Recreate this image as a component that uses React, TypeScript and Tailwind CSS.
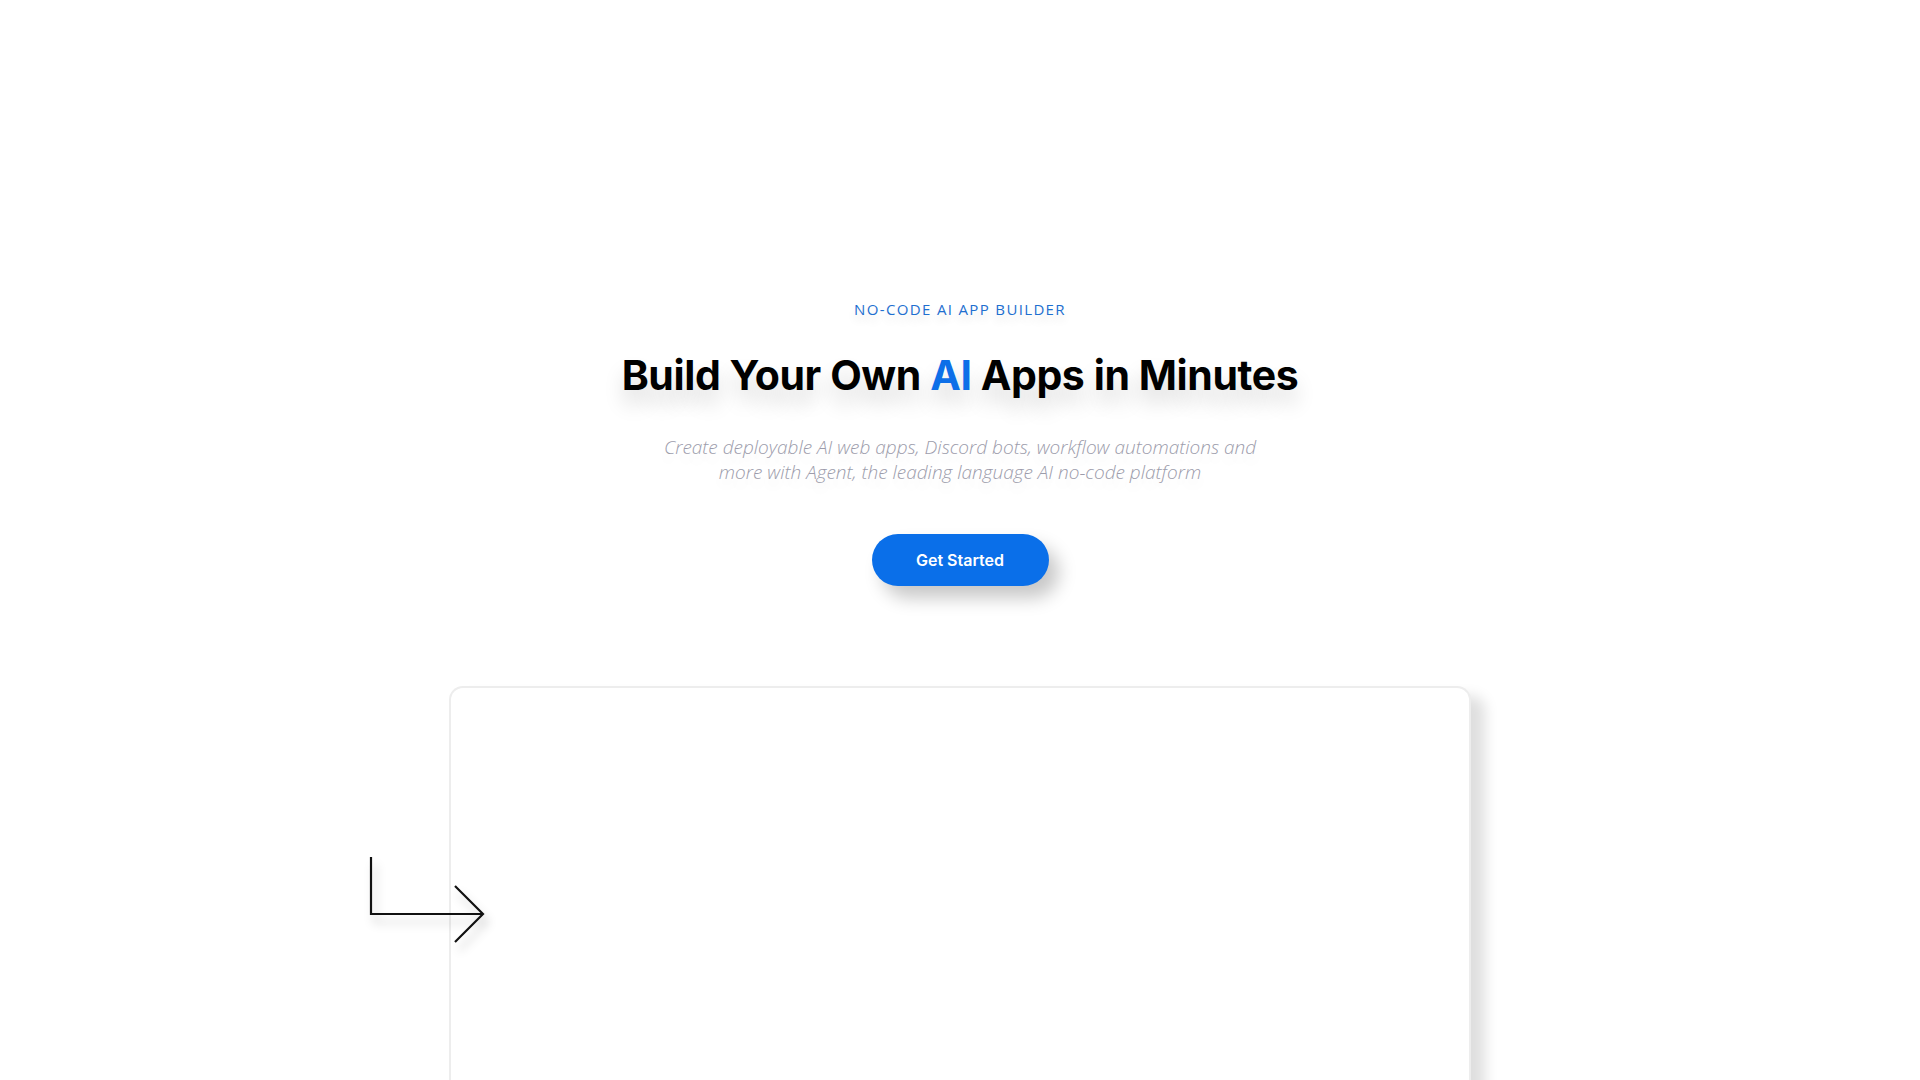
import React from 'react';

// Bent arrow pointing into the preview frame
const BentArrow: React.FC = () => (
  <svg
    width="124"
    height="96"
    viewBox="0 0 124 96"
    fill="none"
    className="absolute left-[-82px] top-[167px] drop-shadow-[4px_8px_5px_rgba(0,0,0,0.22)]"
  >
    <path d="M4 4 V61 H116" stroke="#111" strokeWidth="2.2" />
    <path d="M88 33 L116 61 L88 89" stroke="#111" strokeWidth="2.2" />
  </svg>
);

export default function App() {
  return (
    <div className="min-h-screen w-full bg-white overflow-hidden font-['Inter',sans-serif]">
      <section className="flex flex-col items-center pt-[299px]">
        <p className="font-['Open_Sans',sans-serif] text-[15px] leading-[20px] tracking-[0.09em] text-[#1e6fd0] [text-shadow:0_6px_10px_rgba(0,0,0,0.12)]">
          NO-CODE AI APP BUILDER
        </p>

        <h1 className="mt-[32px] text-[41px] leading-[48px] font-bold tracking-[-0.01em] text-black [text-shadow:0_14px_20px_rgba(0,0,0,0.15)]">
          Build Your Own <span className="text-[#0d6fe8]">AI</span> Apps in Minutes
        </h1>

        <p className="mt-[36px] text-center font-['Open_Sans',sans-serif] font-light italic text-[19px] leading-[25px] text-[#9c9cab] [text-shadow:0_8px_12px_rgba(0,0,0,0.08)]">
          Create deployable AI web apps, Discord bots, workflow automations and
          <br />
          more with Agent, the leading language AI no-code platform
        </p>

        <button className="mt-[49px] h-[52px] w-[177px] rounded-full bg-[#0a6fe9] text-white text-[16px] font-semibold shadow-[10px_12px_18px_rgba(0,0,0,0.22)]">
          Get Started
        </button>

        <div className="relative mt-[100px] w-[1022px]">
          <div className="h-[520px] rounded-t-[14px] border-2 border-b-0 border-[#ededed] bg-white shadow-[14px_10px_14px_rgba(0,0,0,0.13)]" />
          <BentArrow />
        </div>
      </section>
    </div>
  );
}
